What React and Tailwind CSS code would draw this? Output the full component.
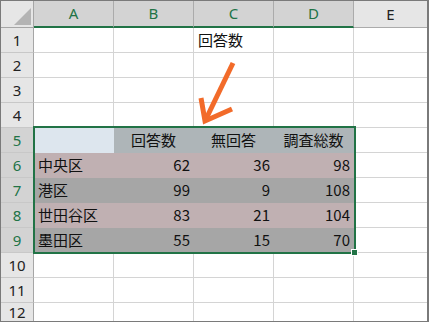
import React from "react";

const JP = { fontFamily: '"Noto Sans CJK JP", "Noto Sans", sans-serif' };

const rows = [
  { n: 1 }, { n: 2 }, { n: 3 }, { n: 4 },
  { n: 5, sel: true, cells: ["", "回答数", "無回答", "調査総数"], kind: "head" },
  { n: 6, sel: true, cells: ["中央区", "62", "36", "98"], kind: "pink" },
  { n: 7, sel: true, cells: ["港区", "99", "9", "108"], kind: "gray" },
  { n: 8, sel: true, cells: ["世田谷区", "83", "21", "104"], kind: "pink" },
  { n: 9, sel: true, cells: ["墨田区", "55", "15", "70"], kind: "gray" },
  { n: 10 }, { n: 11 }, { n: 12 },
];

function RowHeader({ n, sel }) {
  return (
    <div
      className={
        "flex items-center justify-center border-r border-b border-r-[#a6a6a6] border-b-[#c8c8c8] text-[15px] " +
        (sel ? "bg-[#d3d3d3] text-[#217346]" : "bg-[#e6e6e6] text-[#222]")
      }
      style={{ fontFamily: '"Noto Sans", sans-serif' }}
    >
      {n}
    </div>
  );
}

function DataCell({ kind, text, col }) {
  let bg = "bg-white border-[#d4d4d4]";
  let align = "justify-start pl-[4px]";
  if (kind === "head") {
    bg = col === 0 ? "bg-[#dde6ee] border-[#dde6ee]" : "bg-[#aeb5b8] border-[#aeb5b8]";
    align = "justify-center";
  } else if (kind === "pink") {
    bg = "bg-[#c0b0b2] border-[#c0b0b2]";
    align = col === 0 ? "justify-start pl-[4px]" : "justify-end pr-[3px]";
  } else if (kind === "gray") {
    bg = "bg-[#a6a6a6] border-[#a6a6a6]";
    align = col === 0 ? "justify-start pl-[4px]" : "justify-end pr-[3px]";
  }
  return (
    <div
      className={"flex items-center border-r border-b text-[15px] text-[#111] whitespace-nowrap " + bg + " " + align}
      style={JP}
    >
      {text}
    </div>
  );
}

export default function App() {
  return (
    <div className="relative w-[430px] h-[323px] bg-white overflow-hidden">
      <div className="w-[429px] h-[322px] border-l border-t border-b border-r-2 border-[#7a7a7a] overflow-hidden">
        <div className="grid grid-cols-[33px_80px_80px_80px_80px_73px] grid-rows-[27px_repeat(11,25px)_19px]">
          {/* corner */}
          <div className="relative bg-[#e6e6e6] border-r border-b border-r-[#a6a6a6] border-b-[#a6a6a6]">
            <svg className="absolute left-0 top-0" width="33" height="27" viewBox="0 0 33 27">
              <polygon points="30,7 30,24 13,24" fill="#b4b4b4" />
            </svg>
          </div>
          {["A", "B", "C", "D"].map((c) => (
            <div
              key={c}
              className="flex items-center justify-center bg-[#d3d3d3] text-[#217346] text-[15px] border-r border-r-[#ababab] border-b-2 border-b-[#217346]"
              style={{ fontFamily: '"Noto Sans", sans-serif' }}
            >
              {c}
            </div>
          ))}
          <div
            className="flex items-center justify-center bg-[#e6e6e6] text-[#222] text-[15px] border-b border-b-[#ababab]"
            style={{ fontFamily: '"Noto Sans", sans-serif' }}
          >
            E
          </div>

          {rows.map((r) => (
            <React.Fragment key={r.n}>
              <RowHeader n={r.n} sel={r.sel} />
              {[0, 1, 2, 3].map((ci) => (
                <DataCell
                  key={ci}
                  kind={r.kind}
                  col={ci}
                  text={r.n === 1 && ci === 2 ? "回答数" : r.cells ? r.cells[ci] : ""}
                />
              ))}
              <div className="border-b border-[#d4d4d4]" />
            </React.Fragment>
          ))}
        </div>
      </div>

      {/* selection */}
      <div className="absolute left-[33px] top-[126px] w-[323px] h-[128px] border-2 border-[#217346] pointer-events-none" />
      <div className="absolute left-[351px] top-[249px] w-[7px] h-[7px] bg-[#217346] border border-white" />

      {/* arrow */}
      <svg className="absolute left-0 top-0 pointer-events-none" width="430" height="323" viewBox="0 0 430 323">
        <path d="M233 63 L206 119" stroke="#f26b2a" strokeWidth="5" strokeLinecap="butt" fill="none" />
        <path d="M201 98 L205 121 L232 109" stroke="#f26b2a" strokeWidth="5" strokeLinejoin="miter" strokeLinecap="butt" fill="none" />
      </svg>
    </div>
  );
}
